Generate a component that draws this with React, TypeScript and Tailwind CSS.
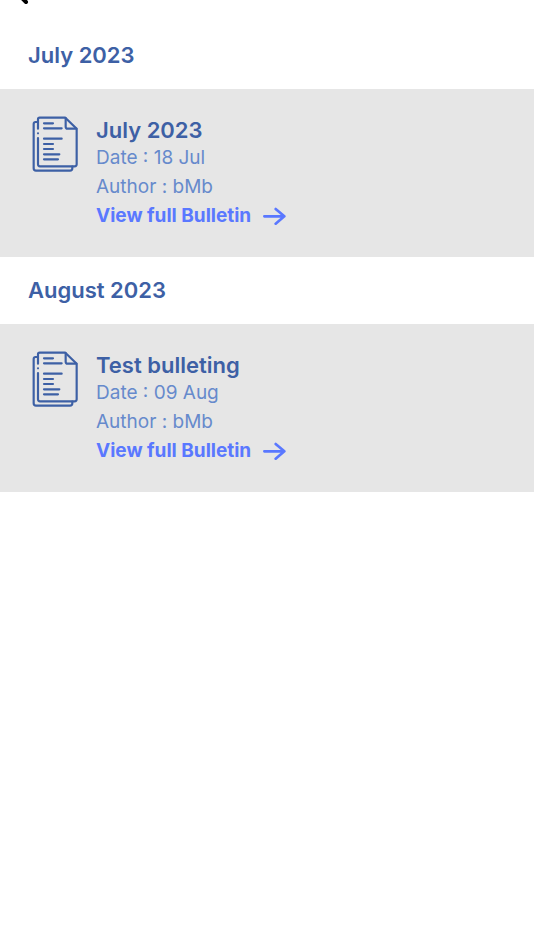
type Bulletin = {
  id: number;
  title: string;
  date: string;
  author: string;
};

type BulletinGroup = {
  month: string;
  bulletins: Bulletin[];
};

const groups: BulletinGroup[] = [
  {
    month: "July 2023",
    bulletins: [{ id: 1, title: "July 2023", date: "18 Jul", author: "bMb" }],
  },
  {
    month: "August 2023",
    bulletins: [{ id: 2, title: "Test bulleting", date: "09 Aug", author: "bMb" }],
  },
];

function DocumentIcon() {
  return (
    <svg
      viewBox="36 33 138 168"
      className="h-14 w-[46px] shrink-0 text-[#3d60a5]"
      fill="none"
      stroke="currentColor"
      strokeWidth="6.5"
      strokeLinecap="round"
      strokeLinejoin="round"
      aria-hidden="true"
    >
      <path d="M54 71V43q0-5 5-5h77l34 33v107q0 6-6 6H60q-6 0-6-6V99" />
      <path d="M54 85v.1" />
      <path d="M137 39v26q0 6 6 6h26" />
      <path d="M52 51h-5q-6 0-6 6v133q0 7 7 7h102q7 0 7-7v-5" />
      <path d="M72 55h27M72 70h53M72 101h53M72 117h27M72 132h27M72 148h46M72 163h42" />
    </svg>
  );
}

function ArrowIcon() {
  return (
    <svg
      viewBox="24 18 69 54"
      className="h-[18px] w-[23px]"
      fill="none"
      stroke="currentColor"
      strokeWidth="8"
      strokeLinecap="round"
      strokeLinejoin="round"
      aria-hidden="true"
    >
      <path d="M28 46h60M62 24l26 22-26 22" />
    </svg>
  );
}

function BulletinRow({ bulletin }: { bulletin: Bulletin }) {
  return (
    <article className="flex gap-[18px] bg-[#e6e6e6] px-8 py-[27px]">
      <DocumentIcon />
      <div>
        <h3 className="text-[22px] leading-7 font-semibold text-[#3d60a5]">{bulletin.title}</h3>
        <p className="text-[19px] leading-7 text-[#668acc]">Date : {bulletin.date}</p>
        <p className="text-[19px] leading-[29px] text-[#668acc]">Author : {bulletin.author}</p>
        <a href="#" className="flex items-center gap-3 text-[19px] leading-[29px] font-bold text-[#5a78ff]">
          View full Bulletin
          <ArrowIcon />
        </a>
      </div>
    </article>
  );
}

export default function App() {
  return (
    <main className="min-h-screen w-full bg-white font-['Inter','Liberation_Sans',sans-serif]">
      <header className="flex h-[22px] items-start px-4">
        <button type="button" aria-label="Back" className="text-black">
          <svg
            viewBox="0 12 14 12"
            className="h-3 w-3.5"
            fill="none"
            stroke="currentColor"
            strokeWidth="4"
            strokeLinecap="round"
            aria-hidden="true"
          >
            <path d="M4 8l6 6" />
          </svg>
        </button>
      </header>

      {groups.map((group) => (
        <section key={group.month}>
          <h2 className="px-7 pt-[17px] pb-[18px] text-[22px] leading-8 font-semibold text-[#3d60a5]">{group.month}</h2>
          {group.bulletins.map((bulletin) => (
            <BulletinRow key={bulletin.id} bulletin={bulletin} />
          ))}
        </section>
      ))}
    </main>
  );
}
